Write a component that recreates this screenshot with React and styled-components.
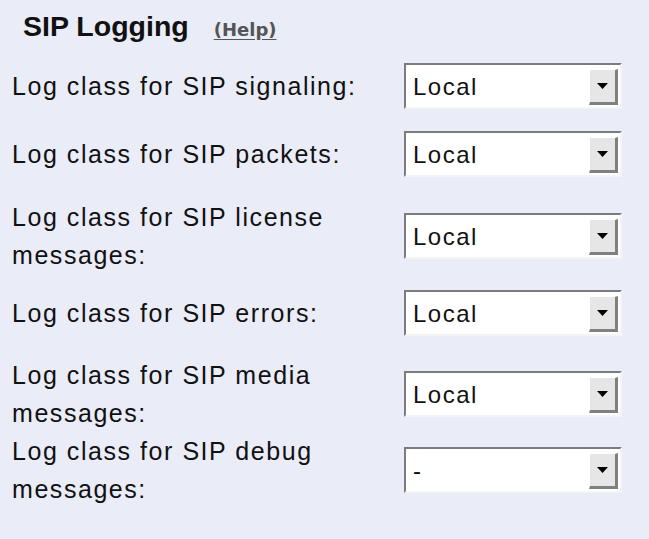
import React from "react";
import styled, { createGlobalStyle } from "styled-components";

// pt / pb = row padding top / bottom, as measured from the screenshot
const rows = [
  { lines: ["Log class for SIP signaling:"], value: "Local", pt: 5, pb: 5 },
  { lines: ["Log class for SIP packets:"], value: "Local", pt: 5, pb: 5 },
  { lines: ["Log class for SIP license", "messages:"], value: "Local", pt: 10, pb: 5 },
  { lines: ["Log class for SIP errors:"], value: "Local", pt: 5, pb: 5 },
  { lines: ["Log class for SIP media", "messages:"], value: "Local", pt: 9, pb: 0 },
  { lines: ["Log class for SIP debug", "messages:"], value: "-", pt: 0, pb: 0 },
];

export default function App() {
  return (
    <>
      <GlobalStyle />
      <Page>
        <Header>
          <Title>SIP Logging</Title>
          <HelpLink href="#">(Help)</HelpLink>
        </Header>
        <Table>
          {rows.map((row, i) => (
            <Row key={i} $pt={row.pt} $pb={row.pb}>
              <Label>
                {row.lines.map((line, j) => (
                  <div key={j}>{line}</div>
                ))}
              </Label>
              <SelectBox>
                <SelectValue>{row.value}</SelectValue>
                <DropButton>
                  <svg width="11" height="6" viewBox="0 0 11 6">
                    <path d="M0 0 H11 L5.5 6 Z" fill="#000" />
                  </svg>
                </DropButton>
              </SelectBox>
            </Row>
          ))}
        </Table>
      </Page>
    </>
  );
}

const GlobalStyle = createGlobalStyle`
  html, body {
    margin: 0;
    padding: 0;
    background: #eaecf8;
  }
`;

const Page = styled.div`
  width: 649px;
  height: 539px;
  background: #eaecf8;
  font-family: "Liberation Sans", Arial, sans-serif;
  color: #111;
  overflow: hidden;
`;

const Header = styled.div`
  display: flex;
  align-items: baseline;
  gap: 25px;
  box-sizing: border-box;
  height: 52px;
  padding: 12px 0 0 23px;
`;

const Title = styled.div`
  font-size: 28.5px;
  line-height: 1;
  font-weight: bold;
  color: #111;
`;

const HelpLink = styled.a`
  font-family: "DejaVu Sans", "Liberation Sans", sans-serif;
  font-size: 18px;
  font-weight: bold;
  color: #555;
  text-decoration: underline;
  text-underline-offset: 3px;
`;

const Table = styled.div`
  display: flex;
  flex-direction: column;
  padding-left: 12px;
`;

const Row = styled.div`
  display: grid;
  grid-template-columns: 392px 218px;
  align-items: center;
  padding: ${(p) => p.$pt}px 0 ${(p) => p.$pb}px;
`;

const Label = styled.div`
  font-size: 25px;
  letter-spacing: 1.55px;
  line-height: 38px;
  color: #111;
`;

const SelectBox = styled.div`
  display: flex;
  align-items: center;
  height: 46px;
  margin: 6px 0;
  box-sizing: border-box;
  background: #fff;
  border-top: 2px solid #7c7c7c;
  border-left: 2px solid #7c7c7c;
  border-bottom: 2px solid #f4f4f4;
  border-right: 2px solid #f4f4f4;
  padding: 4px 2px 2px 7px;
`;

const SelectValue = styled.div`
  flex: 1;
  font-size: 24px;
  letter-spacing: 1.5px;
  color: #111;
`;

const DropButton = styled.div`
  width: 29px;
  height: 36px;
  box-sizing: border-box;
  background: #e6e6e6;
  border-top: 1px solid #fff;
  border-left: 1px solid #fff;
  border-right: 3px solid #808080;
  border-bottom: 3px solid #808080;
  display: flex;
  align-items: center;
  justify-content: center;
`;
